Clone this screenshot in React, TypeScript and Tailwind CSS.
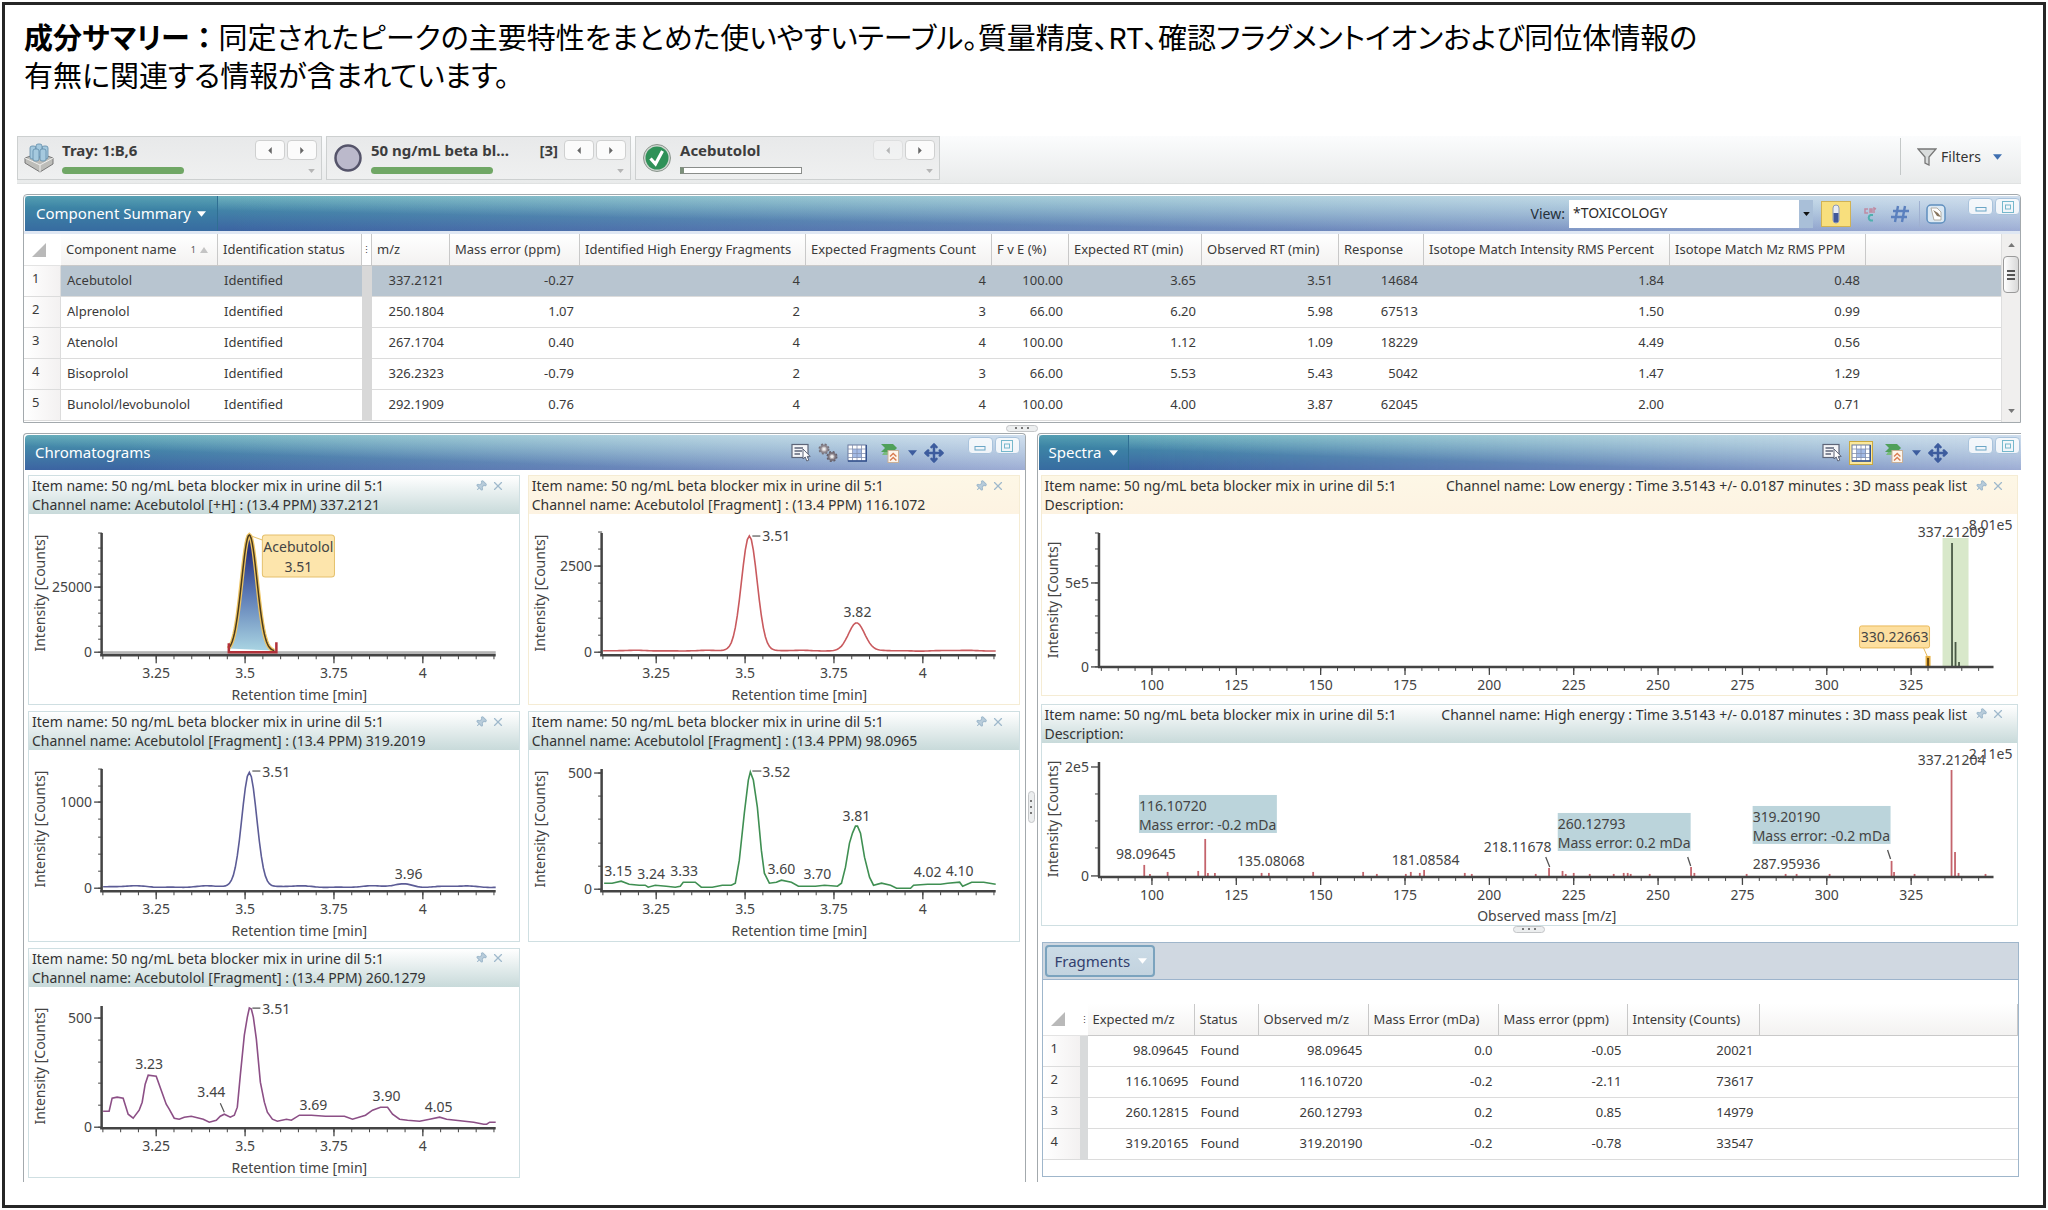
import type { ReactNode } from 'react';
import { Move, Pin, X } from 'lucide-react';

const FONT = "font-['Noto_Sans','Noto_Sans_CJK_JP',sans-serif]";

const HEADER_BG =
  'bg-[linear-gradient(to_right,rgba(255,255,255,0)_10%,rgba(222,216,246,0.5)),linear-gradient(to_bottom_left,rgba(225,247,243,0.8),rgba(255,255,255,0)_66%),linear-gradient(to_bottom,#4799ac,#3c64a2)]';

/* ---------- data ---------- */

const componentColumns = [
  { label: 'm/z', width: 'w-[78px]' },
  { label: 'Mass error (ppm)', width: 'w-[130px]' },
  { label: 'Identified High Energy Fragments', width: 'w-[226px]' },
  { label: 'Expected Fragments Count', width: 'w-[186px]' },
  { label: 'F v E (%)', width: 'w-[77px]' },
  { label: 'Expected RT (min)', width: 'w-[133px]' },
  { label: 'Observed RT (min)', width: 'w-[137px]' },
  { label: 'Response', width: 'w-[85px]' },
  { label: 'Isotope Match Intensity RMS Percent', width: 'w-[246px]' },
  { label: 'Isotope Match Mz RMS PPM', width: 'w-[196px]' },
];

const components = [
  { name: 'Acebutolol', values: ['337.2121', '-0.27', '4', '4', '100.00', '3.65', '3.51', '14684', '1.84', '0.48'] },
  { name: 'Alprenolol', values: ['250.1804', '1.07', '2', '3', '66.00', '6.20', '5.98', '67513', '1.50', '0.99'] },
  { name: 'Atenolol', values: ['267.1704', '0.40', '4', '4', '100.00', '1.12', '1.09', '18229', '4.49', '0.56'] },
  { name: 'Bisoprolol', values: ['326.2323', '-0.79', '2', '3', '66.00', '5.53', '5.43', '5042', '1.47', '1.29'] },
  { name: 'Bunolol/levobunolol', values: ['292.1909', '0.76', '4', '4', '100.00', '4.00', '3.87', '62045', '2.00', '0.71'] },
];

const fragmentColumns = [
  { label: 'Expected m/z', width: 'w-[107px]' },
  { label: 'Status', width: 'w-[64px]' },
  { label: 'Observed m/z', width: 'w-[110px]' },
  { label: 'Mass Error (mDa)', width: 'w-[130px]' },
  { label: 'Mass error (ppm)', width: 'w-[129px]' },
  { label: 'Intensity (Counts)', width: 'w-[132px]' },
];

const fragments = [
  ['98.09645', 'Found', '98.09645', '0.0', '-0.05', '20021'],
  ['116.10695', 'Found', '116.10720', '-0.2', '-2.11', '73617'],
  ['260.12815', 'Found', '260.12793', '0.2', '0.85', '14979'],
  ['319.20165', 'Found', '319.20190', '-0.2', '-0.78', '33547'],
];

type Label = { x: number; y: number; text: string; anchor?: 'start' | 'middle' | 'end' };

interface Chromatogram {
  channel: string;
  cream?: boolean;
  color: string;
  points: string;
  yTicks: number[];
  yLabels: { y: number; text: string }[];
  labels: Label[];
  marks?: string;
  integrated?: boolean;
}

// sum of gaussian peaks over a slightly uneven baseline
function trace(peaks: { x: number; h: number; s: number }[], base: number, noise: number) {
  const out: string[] = [];
  for (let x = 74; x <= 466; x += 2) {
    let y = base - noise * (Math.sin(x / 13) + Math.sin(x / 5.3) * 0.4);
    for (const p of peaks) y -= p.h * Math.exp(-((x - p.x) ** 2) / (2 * p.s ** 2));
    out.push(`${x},${y.toFixed(1)}`);
  }
  return out.join(' ');
}

const greenPoints =
  '75,133 83,133 92,131 100,134 110,135 116,135 119,137 126,135 137,136 146,137 151,136 154,132 166,132 172,137 183,137 193,135 202,135 206,133 210,110 215,63 219,30 221,22 224,30 228,57 232,100 235,123 240,133 247,132 252,130 262,132 269,136 286,136 295,135 308,136 312,133 316,117 320,93 323,83 326,76 328,76 331,83 335,107 340,127 344,135 352,133 361,135 367,138 381,138 384,135 398,134 411,134 418,133 430,132 433,136 442,132 454,132 466,134';

const purplePoints =
  '74,124 80,124 83,111 88,110 94,111 99,127 104,131 110,123 113,115 116,97 119,88 127,89 132,103 137,117 140,122 145,131 150,132 155,130 162,129 174,132 180,135 187,133 191,129 195,127 201,130 205,128 208,120 211,88 215,48 218,30 220,21 222,22 224,30 227,52 231,95 235,115 238,125 243,132 248,134 257,132 262,133 270,128 282,128 296,129 309,129 315,129 323,132 336,128 343,123 351,120 358,120 363,127 370,132 378,133 390,134 400,132 410,130 417,132 426,133 444,135 454,137 457,137 460,135 466,135';

const chromatograms: Chromatogram[] = [
  {
    channel: 'Acebutolol [+H] : (13.4 PPM) 337.2121',
    color: '#6f6f6f',
    points: trace([], 137, 0),
    yTicks: [19, 34, 47, 60, 73, 86, 99, 112, 125, 138],
    yLabels: [{ y: 73, text: '25000' }, { y: 138, text: '0' }],
    labels: [],
    integrated: true,
  },
  {
    channel: 'Acebutolol [Fragment] : (13.4 PPM) 116.1072',
    cream: true,
    color: '#c95a5e',
    points: trace([{ x: 220, h: 115, s: 7.8 }, { x: 327, h: 28, s: 8 }], 136.5, 0.3),
    yTicks: [18, 35, 52, 69, 87, 104, 121, 138],
    yLabels: [{ y: 52, text: '2500' }, { y: 138, text: '0' }],
    labels: [{ x: 233, y: 22, text: '3.51', anchor: 'start' }, { x: 328, y: 98, text: '3.82' }],
    marks: 'M223 22H231',
  },
  {
    channel: 'Acebutolol [Fragment] : (13.4 PPM) 319.2019',
    color: '#5c5c96',
    points: trace([{ x: 220, h: 115, s: 7.4 }, { x: 375, h: 3, s: 9 }], 136.5, 0.7),
    yTicks: [19, 36, 52, 69, 87, 104, 121, 138],
    yLabels: [{ y: 52, text: '1000' }, { y: 138, text: '0' }],
    labels: [{ x: 233, y: 22, text: '3.51', anchor: 'start' }, { x: 379, y: 124, text: '3.96' }],
    marks: 'M223 21H231',
  },
  {
    channel: 'Acebutolol [Fragment] : (13.4 PPM) 98.0965',
    color: '#3f8f52',
    points: greenPoints,
    yTicks: [23, 46, 69, 93, 116, 139],
    yLabels: [{ y: 23, text: '500' }, { y: 139, text: '0' }],
    labels: [
      { x: 89, y: 121, text: '3.15' },
      { x: 122, y: 124, text: '3.24' },
      { x: 155, y: 121, text: '3.33' },
      { x: 233, y: 22, text: '3.52', anchor: 'start' },
      { x: 252, y: 119, text: '3.60' },
      { x: 288, y: 124, text: '3.70' },
      { x: 327, y: 66, text: '3.81' },
      { x: 398, y: 122, text: '4.02' },
      { x: 430, y: 121, text: '4.10' },
    ],
    marks: 'M223 21H232',
  },
  {
    channel: 'Acebutolol [Fragment] : (13.4 PPM) 260.1279',
    color: '#8c4f86',
    points: purplePoints,
    yTicks: [31, 53, 75, 96, 118, 140],
    yLabels: [{ y: 31, text: '500' }, { y: 140, text: '0' }],
    labels: [
      { x: 120, y: 77, text: '3.23' },
      { x: 182, y: 105, text: '3.44' },
      { x: 233, y: 22, text: '3.51', anchor: 'start' },
      { x: 284, y: 118, text: '3.69' },
      { x: 357, y: 109, text: '3.90' },
      { x: 409, y: 120, text: '4.05' },
    ],
    marks: 'M223 21H231M191 116L195 125',
  },
];

/* ---------- small pieces ---------- */

function Caret({ className = '' }: { className?: string }) {
  return (
    <svg viewBox="0 0 10 6" className={`w-[9px] h-[6px] shrink-0 ${className}`}>
      <path d="M0 0H10L5 6Z" fill="currentColor" />
    </svg>
  );
}

function WindowButtons() {
  return (
    <div className="flex gap-0.5 self-start pt-0.5">
      <button aria-label="Minimize" className="w-[25px] h-[17px] rounded-sm border border-[#a9c3dc] bg-white/80 flex items-center justify-center">
        <svg viewBox="0 0 12 10" className="w-3 h-[10px]">
          <rect x="1" y="5.5" width="10" height="3.5" fill="none" stroke="#6ba6c6" />
        </svg>
      </button>
      <button aria-label="Maximize" className="w-[25px] h-[17px] rounded-sm border border-[#a9c3dc] bg-white/80 flex items-center justify-center">
        <svg viewBox="0 0 12 12" className="w-3 h-3">
          <rect x="0.5" y="0.5" width="11" height="11" fill="none" stroke="#76b8cc" />
          <rect x="3.5" y="4" width="5" height="4" fill="none" stroke="#76b8cc" />
        </svg>
      </button>
    </div>
  );
}

function ReportIcon() {
  return (
    <svg viewBox="0 0 20 20" className="w-5 h-5">
      <rect x="1" y="1.5" width="16" height="13" fill="#f4f5f8" stroke="#5d6578" strokeWidth="1.2" />
      <path d="M3.5 5H12M3.5 8H11M3.5 11H9" stroke="#5d6578" strokeWidth="1.3" />
      <path d="M12 6v10l2.2-2 1.6 4 2-0.8-1.6-3.8h3Z" fill="#fff" stroke="#5d6578" />
    </svg>
  );
}

function GearsIcon() {
  return (
    <svg viewBox="0 0 20 20" className="w-5 h-5">
      <circle cx="6" cy="6" r="3.6" fill="#c4bfc2" stroke="#8b858c" strokeWidth="2" />
      <circle cx="6" cy="6" r="4.800" fill="none" stroke="#77717a" strokeWidth="1.4" strokeDasharray="2 1.8" />
      <circle cx="6" cy="6" r="1.6" fill="#eee" />
      <circle cx="14" cy="13.5" r="3.6" fill="#b3adb2" stroke="#7b757e" strokeWidth="2" />
      <circle cx="14" cy="13.5" r="4.800" fill="none" stroke="#645e69" strokeWidth="1.4" strokeDasharray="2 1.8" />
      <circle cx="14" cy="13.5" r="1.6" fill="#eee" />
    </svg>
  );
}

function GridIcon() {
  return (
    <svg viewBox="0 0 20 18" className="w-5 h-[18px]">
      <rect x="1" y="1" width="18" height="16" fill="#fff" stroke="#6b7a9e" />
      <rect x="6" y="5" width="9" height="9" fill="#a3bbe6" />
      <path d="M1 5H19M1 9.5H19M1 13.5H19M5.5 1V17M10 1V17M14.5 1V17" stroke="#8391b0" strokeWidth="0.8" />
      <path d="M1 17H19.5V1" fill="none" stroke="#33518f" strokeWidth="1.6" />
    </svg>
  );
}

function LayersIcon() {
  return (
    <svg viewBox="0 0 20 20" className="w-5 h-5">
      <path d="M1 1H13L17 5L13 9H1L5 5Z" fill="#4fa05a" />
      <path d="M4 9H13L16 12H2Z" fill="#79bb7d" />
      <rect x="8" y="7.5" width="10.5" height="12" fill="#fdf5ec" stroke="#c9b098" />
      <path d="M10 13.5L13.2 10.5L16.4 13.5M10 17.5L13.2 14.5L16.4 17.5" fill="none" stroke="#d97c52" strokeWidth="1.4" />
    </svg>
  );
}

function PanelTools({ gears, gridActive }: { gears?: boolean; gridActive?: boolean }) {
  return (
    <div className={`flex items-center h-full ml-auto ${gears ? 'gap-6 pr-[5px]' : 'gap-5 pr-px'}`}>
      <div className="flex items-center gap-[7px]">
        <button aria-label="Report"><ReportIcon /></button>
        {gears && <button aria-label="Settings"><GearsIcon /></button>}
        <button
          aria-label="Table view"
          className={gridActive ? 'w-6 h-6 bg-[#fbe89c] border border-[#c9a93f] flex items-center justify-center' : 'w-6 flex justify-center'}
        >
          <GridIcon />
        </button>
        <button aria-label="Export" className="flex items-center gap-2 pl-1">
          <LayersIcon />
          <Caret className="text-[#3d5c9e]" />
        </button>
        <button aria-label="Move"><Move className="w-5 h-5 text-[#3d5c9e]" strokeWidth={3} /></button>
      </div>
      <WindowButtons />
    </div>
  );
}

function TrayIcon() {
  return (
    <svg viewBox="0 0 30 30" className="w-[30px] h-[30px]">
      <path d="M1 15L15 10L29 15V21L16 29L1 20Z" fill="#bdbdb9" stroke="#777" />
      <path d="M1 15L16 22L29 15M16 22V29" fill="none" stroke="#efefed" />
      <g fill="#a5c9de" stroke="#5f8ba8" strokeWidth="0.8">
        <rect x="6" y="3" width="6" height="13" rx="2" />
        <rect x="18" y="3" width="6" height="13" rx="2" />
        <rect x="12" y="1" width="6" height="13" rx="2" />
        <rect x="9" y="6" width="6" height="12" rx="2" />
        <rect x="16" y="6" width="6" height="12" rx="2" />
      </g>
    </svg>
  );
}

function CircleIcon() {
  return (
    <svg viewBox="0 0 30 30" className="w-[30px] h-[30px]">
      <circle cx="15" cy="15" r="12.5" fill="#bbb9cb" stroke="#55546a" strokeWidth="2.5" />
    </svg>
  );
}

function CheckIcon() {
  return (
    <svg viewBox="0 0 30 30" className="w-[30px] h-[30px]">
      <circle cx="15" cy="15" r="13.5" fill="#cfd6d0" stroke="#8b958d" />
      <circle cx="15" cy="15" r="11.5" fill="#2f9158" />
      <path d="M8.5 15.5L13.5 21L20.5 8" fill="none" stroke="#fff" strokeWidth="3.2" />
    </svg>
  );
}

/* ---------- top bar ---------- */

interface StepCardProps {
  icon: ReactNode;
  title: string;
  count?: string;
  full: boolean;
  prevDisabled?: boolean;
}

function StepCard({ icon, title, count, full, prevDisabled }: StepCardProps) {
  const navButton =
    'w-[30px] h-5 rounded-sm border border-[#cfd0d0] bg-[#fbfbfb] flex items-center justify-center text-[#666] disabled:opacity-40';
  return (
    <section className="w-[305px] h-11 border border-[#cdd0d0] bg-gradient-to-b from-[#e8e9ea] to-[#eff0f0] flex pl-1.5 pr-1">
      <div className="pt-1.5">{icon}</div>
      <div className="flex-1 pl-2 flex flex-col">
        <div className="flex items-start h-[26px] pt-[3px] gap-0.5">
          <h2 className="flex-1 text-[15px] leading-5 font-bold text-[#3d3d3d] whitespace-nowrap">{title}</h2>
          {count && <span className="text-[15px] leading-5 font-bold text-[#3d3d3d] pr-1">{count}</span>}
          <button aria-label="Previous" disabled={prevDisabled} className={navButton}>
            <svg viewBox="0 0 4 8" className="w-1 h-[7px]"><path d="M4 0V8L0 4Z" fill="currentColor" /></svg>
          </button>
          <button aria-label="Next" className={navButton}>
            <svg viewBox="0 0 4 8" className="w-1 h-[7px]"><path d="M0 0V8L4 4Z" fill="currentColor" /></svg>
          </button>
        </div>
        <div className="flex items-center justify-between pt-1 pr-px">
          <div className={`w-[122px] h-[7px] ${full ? 'bg-[#70a765] rounded-sm' : 'bg-white border border-[#8a8d8a] border-l-4 border-l-[#7c8f7a]'}`} />
          <Caret className="text-[#b5b5b5] scale-75" />
        </div>
      </div>
    </section>
  );
}

function TopBar() {
  return (
    <header className="mt-[43px] ml-3 mr-[22px] h-12 flex bg-gradient-to-b from-[#fbfcfd] to-[#e9ebeb] border-b border-[#e0e2e2]">
      <div className="flex gap-1">
        <StepCard icon={<TrayIcon />} title="Tray: 1:B,6" full />
        <StepCard icon={<CircleIcon />} title="50 ng/mL beta bl..." count="[3]" full />
        <StepCard icon={<CheckIcon />} title="Acebutolol" full={false} prevDisabled />
      </div>
      <button className="ml-auto mt-0.5 mb-2 w-[121px] border-l border-[#c4c8c8] flex items-center pl-4 text-[14px] text-[#333]">
        <svg viewBox="0 0 20 18" className="w-5 h-[18px]">
          <path d="M1 1H19L12 9V17L8 15V9Z" fill="#d9dcdc" stroke="#777" strokeWidth="1.3" />
        </svg>
        <span className="pl-1">Filters</span>
        <Caret className="ml-3 text-[#3f6fb0]" />
      </button>
    </header>
  );
}

/* ---------- tables ---------- */

const thClass =
  'h-8 border-r border-b border-[#c9c9c9] bg-gradient-to-b from-white to-[#f3f2f1] px-[5px] text-left font-normal whitespace-nowrap overflow-hidden';

function CornerCell() {
  return (
    <th className="h-8 border-b border-[#e3e3e3] pl-2 bg-white">
      <svg viewBox="0 0 14 14" className="w-[14px] h-[14px]"><path d="M14 0V14H0Z" fill="#b9b9b9" /></svg>
    </th>
  );
}

function SummaryPanel() {
  return (
    <section className="border border-[#a3a9ad] rounded-t">
      <div className={`h-[35px] mt-px ml-px rounded-tl flex items-center ${HEADER_BG}`}>
        <button className="h-full w-[193px] pl-[11px] text-white text-[15px] flex items-center gap-1.5 whitespace-nowrap border-r border-[#2f6f93] bg-[#2f7ea0]/30">
          Component Summary <Caret />
        </button>
        <div className="ml-auto flex items-center h-full">
          <label htmlFor="view" className="text-[14px] text-[#26303a] pr-1">View:</label>
          <div className="relative flex">
            <select id="view" className="appearance-none w-[244px] h-7 bg-white text-[14px] text-[#2b2b2b] pl-1 pb-0.5">
              <option>*TOXICOLOGY</option>
            </select>
            <span className="absolute right-0 top-0 h-7 w-[14px] bg-[#a9bfd8] flex items-center justify-center pointer-events-none">
              <Caret className="text-[#111] scale-75" />
            </span>
          </div>
          <button aria-label="Component view" className="ml-2 w-[30px] h-[26px] bg-[#f8df7d] border border-[#d0b254] flex items-center justify-center">
            <svg viewBox="0 0 10 20" className="w-[10px] h-5">
              <rect x="2" y="1" width="6" height="18" rx="3" fill="#e8ecf4" stroke="#8d99b5" />
              <path d="M2.5 9h5v7a2.5 2.5 0 0 1-5 0Z" fill="#41589a" />
            </svg>
          </button>
          <button aria-label="Structure" className="ml-2 w-[22px] flex justify-center">
            <svg viewBox="0 0 14 20" className="w-[14px] h-5" fill="none" strokeWidth="1.5">
              <path d="M5 5H2v4h3M7 9V5h2v4M7 7h2M11 9V4l2 1" stroke="#c08ba2" />
              <path d="M10 11H7.5a3 3 0 0 0 0 5.5H10" stroke="#4fb0ae" strokeWidth="2" />
            </svg>
          </button>
          <button aria-label="Numbers" className="ml-2.5 w-[22px]">
            <svg viewBox="0 0 18 18" className="w-[18px] h-[18px]" stroke="#5b80be" strokeWidth="2.4" fill="none">
              <path d="M7 1L4 17M14 1L11 17M2 6H18M0 12H16" />
            </svg>
          </button>
          <span className="mx-1.5 h-[26px] w-px bg-[#9fb0d0]" />
          <button aria-label="Copy settings" className="w-[22px]">
            <svg viewBox="0 0 20 20" className="w-5 h-5">
              <rect x="1" y="1" width="18" height="18" rx="4" fill="#dbe8f3" stroke="#5f8fbe" strokeWidth="1.5" />
              <path d="M5 4h6l4 4v8H8Z" fill="#fff" stroke="#b3aea4" />
              <path d="M7 6l5 3 3 4-4-1Z" fill="#86745d" />
            </svg>
          </button>
          <div className="ml-5 self-start"><WindowButtons /></div>
        </div>
      </div>
      <div className="h-[3px] bg-[#dfe7f3]" />
      <div className="flex">
        <table className="flex-1 table-fixed border-separate border-spacing-0 text-[13px] text-[#3a3a3a] mb-px">
          <colgroup>
            <col className="w-[37px]" />
            <col className="w-[157px]" />
            <col className="w-[144px]" />
            <col className="w-[7px]" />
            {componentColumns.map((col) => (
              <col key={col.label} className={col.width} />
            ))}
            <col />
          </colgroup>
          <thead>
            <tr>
              <CornerCell />
              <th className={thClass}>
                <span className="flex items-center justify-between">
                  Component name
                  <span className="flex items-center text-[9px] text-[#555] pr-1">
                    1<svg viewBox="0 0 8 6" className="ml-1 w-2 h-[6px]"><path d="M4 0L8 6H0Z" fill="#c4c4c4" /></svg>
                  </span>
                </span>
              </th>
              <th className={thClass}>Identification status</th>
              <th className="border-r border-b border-[#c9c9c9] text-[9px] leading-none font-normal">⋮</th>
              {componentColumns.map((col) => (
                <th key={col.label} className={thClass}>{col.label}</th>
              ))}
              <th className="border-b border-[#c9c9c9] bg-gradient-to-b from-white to-[#f3f2f1]" />
            </tr>
          </thead>
          <tbody>
            {components.map((row, i) => {
              const cell = `h-[31px] border-b border-[#dcdcdc] px-1.5 whitespace-nowrap ${i === 0 ? 'bg-[#b8c5d0]' : ''}`;
              return (
                <tr key={row.name}>
                  <th className="border-r border-b border-[#dcdcdc] bg-gradient-to-r from-white to-[#f3f1f1] text-left pl-2 pb-1 font-normal">
                    {i + 1}
                  </th>
                  <td className={cell}>{row.name}</td>
                  <td className={cell}>Identified</td>
                  <td className="bg-[#d8d8d8]" />
                  {row.values.map((v, j) => (
                    <td key={j} className={`${cell} text-right`}>{v}</td>
                  ))}
                  <td className={cell} />
                </tr>
              );
            })}
          </tbody>
        </table>
        <div className="w-[19px] bg-[#f0efee] border-l border-[#dedede] flex flex-col items-center text-[#777] py-2">
          <Caret className="rotate-180 scale-75" />
          <div className="mt-2 w-4 h-[37px] border border-[#9a9a9a] rounded-sm bg-gradient-to-r from-white to-[#d8d8d8] flex flex-col items-center justify-center gap-0.5">
            <i className="w-2 h-0.5 bg-[#555]" />
            <i className="w-2 h-0.5 bg-[#555]" />
            <i className="w-2 h-0.5 bg-[#555]" />
          </div>
          <Caret className="mt-auto scale-75" />
        </div>
      </div>
    </section>
  );
}

function FragmentsPanel() {
  return (
    <section className="ml-1 mr-0.5 border border-[#9fb6cb]">
      <div className="h-[37px] bg-[#d0d8e1] border-b border-[#9db4cc] p-0.5">
        <button className="h-full w-[110px] rounded border-2 border-[#7ba3be] bg-gradient-to-b from-[#cbdbe6] to-[#c3d3df] text-[15px] text-[#33406e] flex items-center gap-2 pl-2">
          Fragments <Caret className="text-white" />
        </button>
      </div>
      <table className="w-full mt-6 mb-4 table-fixed border-separate border-spacing-0 text-[13px] text-[#3a3a3a]">
        <colgroup>
          <col className="w-[37px]" />
          <col className="w-[8px]" />
          {fragmentColumns.map((col) => (
            <col key={col.label} className={col.width} />
          ))}
          <col />
        </colgroup>
        <thead>
          <tr>
            <CornerCell />
            <th className="border-b border-[#e3e3e3] text-[9px] leading-none font-normal">⋮</th>
            {fragmentColumns.map((col) => (
              <th key={col.label} className={thClass}>{col.label}</th>
            ))}
            <th className={thClass} />
          </tr>
        </thead>
        <tbody>
          {fragments.map((row, i) => (
            <tr key={i}>
              <th className="h-[31px] border-b border-[#dcdcdc] bg-gradient-to-r from-white to-[#f3f1f1] text-left pl-2 pb-1 font-normal">
                {i + 1}
              </th>
              <td className="bg-[#d8dadb]" />
              {row.map((v, j) => (
                <td key={j} className={`border-b border-[#dcdcdc] px-1.5 ${j === 1 ? '' : 'text-right'}`}>{v}</td>
              ))}
              <td className="border-b border-[#dcdcdc]" />
            </tr>
          ))}
        </tbody>
      </table>
    </section>
  );
}

/* ---------- charts ---------- */

interface ChartCardProps {
  left: string;
  right?: string;
  second: string;
  cream?: boolean;
  children: ReactNode;
}

function ChartCard({ left, right, second, cream, children }: ChartCardProps) {
  return (
    <article className={`border ${cream ? 'border-[#f5ecd4]' : 'border-[#cfdfe2]'}`}>
      <div
        className={`h-[38px] flex pl-[3px] pr-3 text-[14px] leading-[19px] text-[#333] whitespace-nowrap ${
          cream ? 'bg-gradient-to-b from-[#fdf7e6] to-[#fdf3e2]' : 'bg-gradient-to-b from-white to-[#c8dada]'
        }`}
      >
        <div>
          <p>{left}</p>
          <p>{second}</p>
        </div>
        {right && <p className="ml-auto">{right}</p>}
        <div className={`flex h-[19px] items-center gap-1 text-[#9fb9cc] ${right ? 'ml-2' : 'ml-auto pr-0.5'}`}>
          <button aria-label="Pin"><Pin className="w-3 h-3 rotate-45 fill-[#b9cddb]" /></button>
          <button aria-label="Close"><X className="w-[14px] h-[14px]" /></button>
        </div>
      </div>
      {children}
    </article>
  );
}

function Labels({ items }: { items: Label[] }) {
  return (
    <>
      {items.map((l, i) => (
        <text key={i} x={l.x} y={l.y + 5} textAnchor={l.anchor ?? 'middle'}>{l.text}</text>
      ))}
    </>
  );
}

function ChromatogramChart({ chart }: { chart: Chromatogram }) {
  const minor: number[] = [];
  for (let i = -3; i <= 19; i++) minor.push(127 + i * 17.75);
  const peak: string[] = [];
  for (let x = 199; x <= 245; x++) peak.push(`${x},${(137 - 116 * Math.exp(-((x - 220) ** 2) / 118)).toFixed(1)}`);

  return (
    <svg viewBox="0 0 489 190" className="block w-full h-auto text-[14px]" fill="#444">
      <defs>
        <linearGradient id="peakFill" x1="0" y1="0" x2="0" y2="1">
          <stop offset="0.15" stopColor="#2a3580" />
          <stop offset="0.5" stopColor="#5a78b4" />
          <stop offset="1" stopColor="#a9d4e2" />
        </linearGradient>
      </defs>
      {chart.integrated ? (
        <>
          <rect x="73" y="137" width="393" height="3" fill="#b5b5b5" />
          <polygon points={peak.join(' ')} fill="url(#peakFill)" />
          <polyline points={peak.join(' ')} fill="none" stroke="#edc463" strokeWidth="4" />
          <polyline points={peak.join(' ')} fill="none" stroke="#4a3a1c" strokeWidth="1.5" />
        </>
      ) : (
        <polyline points={chart.points} fill="none" stroke={chart.color} strokeWidth="1.6" />
      )}
      <path d="M72.5 19V141M71 141H466" stroke="#444" strokeWidth="2.5" fill="none" />
      {chart.yTicks.map((y) => (
        <path key={y} d={`M69 ${y}H73`} stroke="#444" />
      ))}
      {chart.yLabels.map((l) => (
        <g key={l.y}>
          <path d={`M65 ${l.y}H73`} stroke="#444" strokeWidth="1.3" />
          <text x="63" y={l.y + 5} textAnchor="end">{l.text}</text>
        </g>
      ))}
      {minor.map((x) => (
        <path key={x} d={`M${x} 141V145`} stroke="#444" />
      ))}
      {['3.25', '3.5', '3.75', '4'].map((t, i) => (
        <g key={t}>
          <path d={`M${127 + i * 88.75} 141V149`} stroke="#444" strokeWidth="1.3" />
          <text x={127 + i * 88.75} y="164" textAnchor="middle">{t}</text>
        </g>
      ))}
      {chart.integrated && (
        <>
          <path d="M199.5 129V138H247V128" fill="none" stroke="#b2323a" strokeWidth="2.5" />
          <path d="M222 22L233 26" stroke="#e5c06c" />
          <rect x="233" y="21" width="72" height="42" rx="3" fill="#fde5ac" stroke="#e5c06c" />
          <text x="269" y="38" textAnchor="middle">Acebutolol</text>
          <text x="269" y="58" textAnchor="middle">3.51</text>
        </>
      )}
      {chart.marks && <path d={chart.marks} stroke="#555" strokeWidth="1.2" />}
      <Labels items={chart.labels} />
      <text x="270" y="186" textAnchor="middle">Retention time [min]</text>
      <text transform="translate(16 79) rotate(-90)" textAnchor="middle">Intensity [Counts]</text>
    </svg>
  );
}

interface SpectrumAxesProps {
  top: number;
  base: number;
  yTicks: number[];
  yLabels: { y: number; text: string }[];
  titleY: number;
}

function SpectrumAxes({ top, base, yTicks, yLabels, titleY }: SpectrumAxesProps) {
  const minor: number[] = [];
  for (let m = 85; m <= 345; m += 5) minor.push(110 + (m - 100) * 3.376);
  const major = [100, 125, 150, 175, 200, 225, 250, 275, 300, 325];
  return (
    <>
      <path d={`M57 ${top}V${base}M56 ${base}H952`} stroke="#444" strokeWidth="2.5" fill="none" />
      {yTicks.map((y) => (
        <path key={y} d={`M53 ${y}H57`} stroke="#444" />
      ))}
      {yLabels.map((l) => (
        <g key={l.y}>
          <path d={`M49 ${l.y}H57`} stroke="#444" strokeWidth="1.3" />
          <text x="47" y={l.y + 5} textAnchor="end">{l.text}</text>
        </g>
      ))}
      {minor.map((x) => (
        <path key={x} d={`M${x} ${base}V${base + 4}`} stroke="#444" />
      ))}
      {major.map((m) => (
        <g key={m}>
          <path d={`M${110 + (m - 100) * 3.376} ${base}V${base + 8}`} stroke="#444" strokeWidth="1.3" />
          <text x={110 + (m - 100) * 3.376} y={base + 23} textAnchor="middle">{m}</text>
        </g>
      ))}
      <text transform={`translate(16 ${titleY}) rotate(-90)`} textAnchor="middle">Intensity [Counts]</text>
    </>
  );
}

function LowEnergyChart() {
  return (
    <svg viewBox="0 0 976 181" className="block w-full h-auto text-[14px]" fill="#444">
      <rect x="901" y="24" width="26" height="129" fill="#d8e8ca" />
      <rect x="884" y="142" width="5" height="11" fill="#e8b040" />
      <path d="M886.5 144V153" stroke="#6b4a12" strokeWidth="2" />
      <path d="M910.5 29V153M914 128V153M917.5 148V153" stroke="#4a5a46" strokeWidth="1.8" />
      <SpectrumAxes
        top={19}
        base={153}
        yTicks={[19, 35, 52, 69, 86, 102, 119, 136, 153]}
        yLabels={[{ y: 69, text: '5e5' }, { y: 153, text: '0' }]}
        titleY={86}
      />
      <path d="M882 134L886 143" stroke="#e5b95c" />
      <rect x="818" y="112" width="70" height="22" rx="2" fill="#fddf9f" stroke="#e9b95a" />
      <Labels
        items={[
          { x: 853, y: 123, text: '330.22663' },
          { x: 910, y: 18, text: '337.21209' },
          { x: 971, y: 11, text: '8.01e5', anchor: 'end' },
        ]}
      />
    </svg>
  );
}

const highEnergyPeaks = [
  [102.3, 122], [108, 131], [125.7, 129], [156.3, 128], [163.3, 96], [166, 130], [173, 130], [219.7, 130], [227, 130],
  [271.3, 129], [321.3, 129], [335, 131], [364, 131], [369, 129], [378, 130], [382.3, 127], [423, 130], [430, 131], [494, 131],
  [507.3, 125], [520.8, 128], [524, 131], [532, 130], [548, 131], [572, 131], [582, 130], [586, 130], [589, 131], [608, 131],
  [649.4, 124], [652.7, 130], [705, 131], [744, 131], [755, 131], [788, 131], [850, 118], [852.5, 129], [873, 131], [910, 27],
  [913.5, 109], [917, 130], [944, 131],
];

const massErrorTags = [
  { x: 97, y: 52, w: 138, mass: '116.10720', error: 'Mass error: -0.2 mDa' },
  { x: 516, y: 70, w: 133, mass: '260.12793', error: 'Mass error: 0.2 mDa' },
  { x: 711, y: 63, w: 138, mass: '319.20190', error: 'Mass error: -0.2 mDa' },
];

function HighEnergyChart() {
  return (
    <svg viewBox="0 0 976 182" className="block w-full h-auto text-[14px]" fill="#444">
      {highEnergyPeaks.map(([x, y]) => (
        <path key={x} d={`M${x} ${y}V134`} stroke="#c4646c" strokeWidth="1.8" />
      ))}
      <SpectrumAxes
        top={19}
        base={134}
        yTicks={[51, 78, 105]}
        yLabels={[{ y: 24, text: '2e5' }, { y: 133, text: '0' }]}
        titleY={76}
      />
      {massErrorTags.map((t) => (
        <g key={t.mass}>
          <rect x={t.x} y={t.y} width={t.w} height="38" fill="#bbd4db" />
          <text x={t.x} y={t.y + 16}>{t.mass}</text>
          <text x={t.x} y={t.y + 35}>{t.error}</text>
        </g>
      ))}
      <path d="M504 114L508 124M646 114L649 123M846 107L849 116" stroke="#555" strokeWidth="1.3" />
      <Labels
        items={[
          { x: 74, y: 111, text: '98.09645', anchor: 'start' },
          { x: 195, y: 118, text: '135.08068', anchor: 'start' },
          { x: 350, y: 117, text: '181.08584', anchor: 'start' },
          { x: 442, y: 104, text: '218.11678', anchor: 'start' },
          { x: 711, y: 121, text: '287.95936', anchor: 'start' },
          { x: 910, y: 17, text: '337.21204' },
          { x: 971, y: 11, text: '2.11e5', anchor: 'end' },
          { x: 505, y: 173, text: 'Observed mass [m/z]' },
        ]}
      />
    </svg>
  );
}

/* ---------- page ---------- */

const ITEM = 'Item name: 50 ng/mL beta blocker mix in urine dil 5:1';

function Handle({ vertical }: { vertical?: boolean }) {
  return (
    <div
      className={`rounded-sm border border-[#c4c6c8] bg-[#eceeef] flex items-center justify-center gap-1 ${
        vertical ? 'flex-col w-[7px] h-8' : 'w-8 h-[7px]'
      }`}
    >
      <i className="w-0.5 h-0.5 bg-[#777]" />
      <i className="w-0.5 h-0.5 bg-[#777]" />
      <i className="w-0.5 h-0.5 bg-[#777]" />
    </div>
  );
}

export default function App() {
  return (
    <div className={`min-h-screen flex bg-white p-0.5 ${FONT}`}>
      <main className="flex-1 min-w-0 border-[3px] border-[#262626] text-[#333]">
        <p className="pt-3 pl-[19px] text-[29px] leading-[38px] text-black [font-feature-settings:'palt'] font-['Noto_Sans_CJK_JP',sans-serif]">
          <b>成分サマリー<span className="[font-feature-settings:normal]">：</span></b>
          同定されたピークの主要特性をまとめた使いやすいテーブル。質量精度、RT、確認フラグメントイオンおよび同位体情報の
          <br />
          有無に関連する情報が含まれています。
        </p>
        <TopBar />
        <div className="ml-[18px] mr-[22px] mt-[10px]">
          <SummaryPanel />
          <div className="h-[10px] flex justify-center items-center"><Handle /></div>
          <div className="grid grid-cols-[1002fr_11px_984fr]">
            <section className="border border-b-0 border-[#a3a9ad] rounded-t pb-1">
              <div className={`h-[35px] mt-px ml-px rounded-tl flex items-center ${HEADER_BG}`}>
                <h2 className="pl-[10px] text-[15px] text-white">Chromatograms</h2>
                <PanelTools gears />
              </div>
              <div className="grid grid-cols-2 gap-x-2 gap-y-[6px] pl-1 pr-[5px] pt-[5px]">
                {chromatograms.map((c) => (
                  <ChartCard key={c.channel} left={ITEM} second={`Channel name: ${c.channel}`} cream={c.cream}>
                    <ChromatogramChart chart={c} />
                  </ChartCard>
                ))}
              </div>
            </section>
            <div className="flex items-center justify-center"><Handle vertical /></div>
            <section className="border-t border-l border-[#a3a9ad] rounded-tl pb-1">
              <div className={`h-[35px] mt-px ml-px rounded-tl flex items-center ${HEADER_BG}`}>
                <button className="h-full w-[90px] pl-[10px] text-[15px] text-white flex items-center gap-2 border-r border-[#2f6f93] bg-[#2f7ea0]/30">
                  Spectra <Caret />
                </button>
                <PanelTools gridActive />
              </div>
              <div className="flex flex-col gap-2 pl-[3px] pr-[3px] pt-[5px]">
                <ChartCard
                  left={ITEM}
                  second="Description:"
                  right="Channel name: Low energy : Time 3.5143 +/- 0.0187 minutes : 3D mass peak list"
                  cream
                >
                  <LowEnergyChart />
                </ChartCard>
                <ChartCard
                  left={ITEM}
                  second="Description:"
                  right="Channel name: High energy : Time 3.5143 +/- 0.0187 minutes : 3D mass peak list"
                >
                  <HighEnergyChart />
                </ChartCard>
              </div>
              <div className="h-4 flex justify-center"><Handle /></div>
              <FragmentsPanel />
            </section>
          </div>
        </div>
      </main>
    </div>
  );
}
